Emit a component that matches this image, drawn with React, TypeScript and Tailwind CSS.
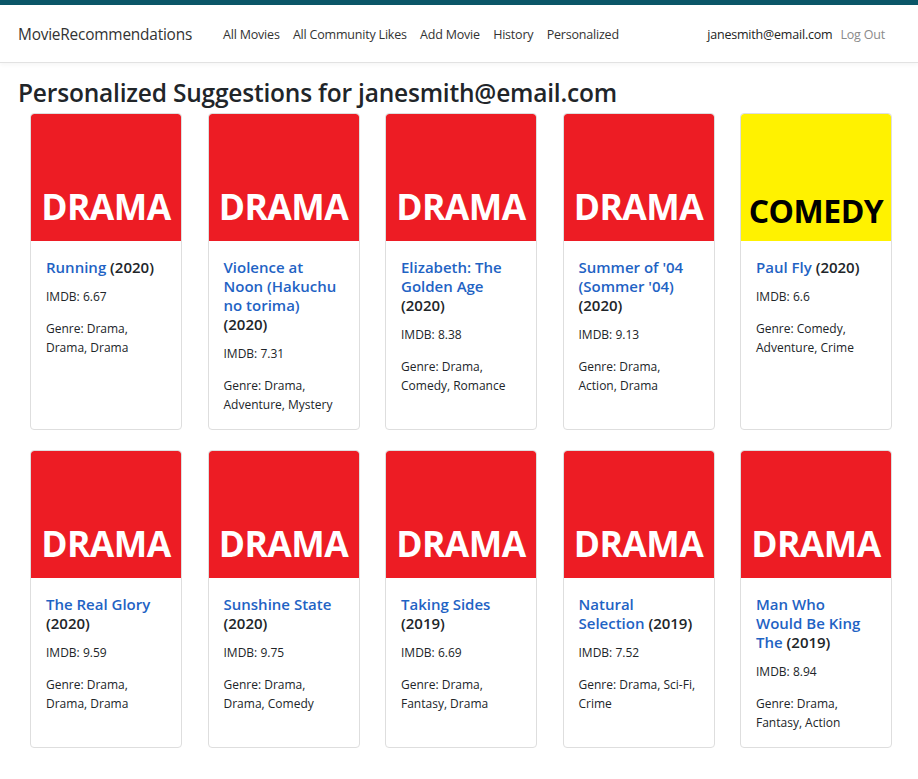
import React from "react";

type Movie = { title: string; year: string; imdb: string; genre: string; poster: "DRAMA" | "COMEDY" };

const movies: Movie[] = [
  { title: "Running", year: "(2020)", imdb: "6.67", genre: "Genre: Drama, Drama, Drama", poster: "DRAMA" },
  { title: "Violence at Noon (Hakuchu no torima)", year: "(2020)", imdb: "7.31", genre: "Genre: Drama, Adventure, Mystery", poster: "DRAMA" },
  { title: "Elizabeth: The Golden Age", year: "(2020)", imdb: "8.38", genre: "Genre: Drama, Comedy, Romance", poster: "DRAMA" },
  { title: "Summer of '04 (Sommer '04)", year: "(2020)", imdb: "9.13", genre: "Genre: Drama, Action, Drama", poster: "DRAMA" },
  { title: "Paul Fly", year: "(2020)", imdb: "6.6", genre: "Genre: Comedy, Adventure, Crime", poster: "COMEDY" },
  { title: "The Real Glory", year: "(2020)", imdb: "9.59", genre: "Genre: Drama, Drama, Drama", poster: "DRAMA" },
  { title: "Sunshine State", year: "(2020)", imdb: "9.75", genre: "Genre: Drama, Drama, Comedy", poster: "DRAMA" },
  { title: "Taking Sides", year: "(2019)", imdb: "6.69", genre: "Genre: Drama, Fantasy, Drama", poster: "DRAMA" },
  { title: "Natural Selection", year: "(2019)", imdb: "7.52", genre: "Genre: Drama, Sci-Fi, Crime", poster: "DRAMA" },
  { title: "Man Who Would Be King The", year: "(2019)", imdb: "8.94", genre: "Genre: Drama, Fantasy, Action", poster: "DRAMA" },
];

function Poster({ kind }: { kind: "DRAMA" | "COMEDY" }) {
  if (kind === "COMEDY") {
    return (
      <div className="h-[127px] bg-[#fff200] rounded-t-[3px] flex items-end justify-center pb-[14px]">
        <span className="text-[32px] leading-none font-bold text-black tracking-[-0.5px]">COMEDY</span>
      </div>
    );
  }
  return (
    <div className="h-[127px] bg-[#ed1c24] rounded-t-[3px] flex items-end justify-center pb-[17px]">
      <span className="text-[35.5px] leading-none font-bold text-white tracking-[-0.5px]">DRAMA</span>
    </div>
  );
}

function Card({ m }: { m: Movie }) {
  return (
    <div className="border border-[#dedede] rounded-[4px] bg-white overflow-hidden flex flex-col">
      <Poster kind={m.poster} />
      <div className="pl-[15px] pr-[17px] pt-[17px] pb-[15px]">
        <h5 className="text-[15px] leading-[19px] font-semibold text-[#212529]">
          <span className="text-[#1f63c4]">{m.title}</span> {m.year}
        </h5>
        <p className="mt-[10px] text-[12px] leading-[19px] text-[#212529]">IMDB: {m.imdb}</p>
        <p className="mt-[13px] text-[12px] leading-[19px] text-[#212529]">{m.genre}</p>
      </div>
    </div>
  );
}

export default function App() {
  return (
    <div className="min-h-[779px] bg-white font-['Open_Sans',sans-serif] text-[#212529]">
      <div className="h-[5px] bg-[#0b5668]" />
      <nav className="h-[58px] pt-[3px] border-b border-[#e2e2e2] shadow-[0_2px_4px_rgba(0,0,0,0.04)] flex items-center px-[18px]">
        <span className="text-[15.4px] text-[#333] tracking-[-0.2px]">MovieRecommendations</span>
        <div className="flex items-center ml-[31px] gap-[13.25px] text-[12.5px] text-[#333] tracking-[-0.2px]">
          <span>All Movies</span>
          <span>All Community Likes</span>
          <span>Add Movie</span>
          <span>History</span>
          <span>Personalized</span>
        </div>
        <div className="ml-auto mr-[15px] flex items-center gap-[8px] text-[12.5px] tracking-[-0.2px]">
          <span className="text-[#222]">janesmith@email.com</span>
          <span className="text-[#8a8a8a]">Log Out</span>
        </div>
      </nav>
      <h1 className="px-[18px] pt-[14px] text-[24.5px] leading-[32px] font-semibold text-[#212529] tracking-[-0.2px]">
        Personalized Suggestions for janesmith@email.com
      </h1>
      <div className="ml-[30px] w-[862px] mt-[4px] grid grid-cols-5 gap-x-[25.5px] gap-y-[20px]">
        {movies.map((m, i) => (
          <Card key={i} m={m} />
        ))}
      </div>
    </div>
  );
}
